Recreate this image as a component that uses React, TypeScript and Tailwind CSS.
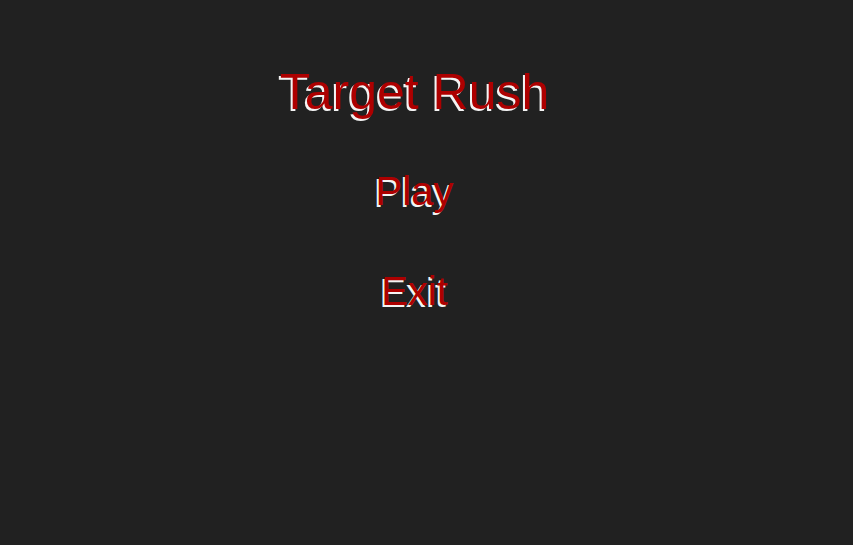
import React from "react";

export default function App() {
  return (
    <div className="w-[853px] h-[545px] bg-[#212121] overflow-hidden">
      <div
        className="flex flex-col items-center pr-[24px] pt-[67px]"
        style={{ fontFamily: '"Liberation Sans", Arial, sans-serif' }}
      >
        <h1 className="text-[50px] leading-none text-[#ad0000] [text-shadow:-2px_2px_0_#f4f4f4] whitespace-nowrap">
          Target Rush
        </h1>
        <button className="mt-[54px] text-[40px] leading-none text-[#ad0000] [text-shadow:-2px_2px_0_#f4f4f4] cursor-pointer">
          Play
        </button>
        <button className="mt-[60px] text-[40px] leading-none text-[#ad0000] [text-shadow:-2px_2px_0_#f4f4f4] cursor-pointer">
          Exit
        </button>
      </div>
    </div>
  );
}
